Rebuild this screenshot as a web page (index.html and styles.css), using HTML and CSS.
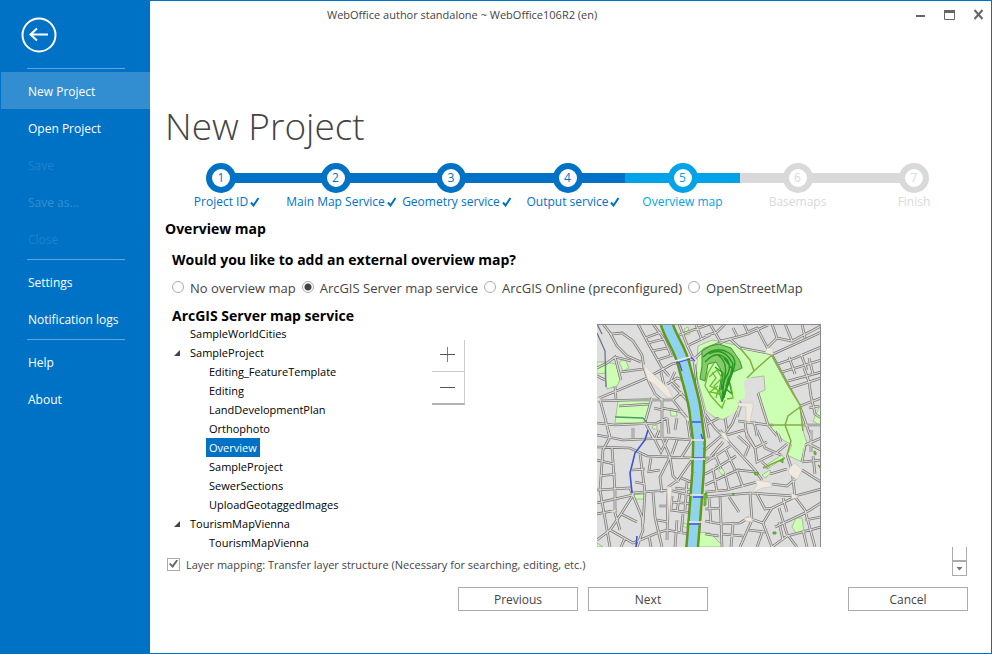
FILE: index.html
```html
<!DOCTYPE html>
<html lang="en">
<head>
<meta charset="utf-8">
<title>WebOffice author standalone</title>
<link rel="stylesheet" href="styles.css">
</head>
<body>
<div class="window">
  <aside class="sidebar">
    <button class="back" aria-label="Back">
      <svg width="36" height="36" viewBox="0 0 36 36"><circle cx="18" cy="18" r="16.5"/><path d="M27 17.5H10M16 11.5l-6.500 6 6.500 6"/></svg>
    </button>
    <nav class="menu">
      <hr>
      <a class="item active" href="#">New Project</a>
      <a class="item" href="#">Open Project</a>
      <a class="item off">Save</a>
      <a class="item off lit">Save as...</a>
      <a class="item off">Close</a>
      <hr>
      <a class="item" href="#">Settings</a>
      <a class="item" href="#">Notification logs</a>
      <hr>
      <a class="item" href="#">Help</a>
      <a class="item" href="#">About</a>
    </nav>
  </aside>

  <main class="main">
    <header class="titlebar">
      <span class="caption">WebOffice author standalone ~ WebOffice106R2 (en)</span>
      <div class="controls">
        <button aria-label="Minimize"><svg width="11" height="12" viewBox="0 0 11 12"><path d="M1 7h9" stroke-width="2"/></svg></button>
        <button aria-label="Maximize"><svg width="11" height="12" viewBox="0 0 11 12"><path d="M.5 2.500v8h10v-8M0 2h11" /><path d="M0 2.500h11" stroke-width="3"/></svg></button>
        <button aria-label="Close"><svg width="11" height="12" viewBox="0 0 11 12"><path d="M1.500 1l8 9M9.500 1l-8 9" stroke-width="2"/></svg></button>
      </div>
    </header>

    <h1>New Project</h1>

    <ol class="steps">
      <li class="done"><span class="dot">1</span><span class="name">Project ID<svg class="tick" viewBox="0 0 10 10"><path d="M1 5.500l2.500 3L8.500 1"/></svg></span></li>
      <li class="done"><span class="dot">2</span><span class="name">Main Map Service<svg class="tick" viewBox="0 0 10 10"><path d="M1 5.500l2.500 3L8.500 1"/></svg></span></li>
      <li class="done"><span class="dot">3</span><span class="name">Geometry service<svg class="tick" viewBox="0 0 10 10"><path d="M1 5.500l2.500 3L8.500 1"/></svg></span></li>
      <li class="done"><span class="dot">4</span><span class="name">Output service<svg class="tick" viewBox="0 0 10 10"><path d="M1 5.500l2.500 3L8.500 1"/></svg></span></li>
      <li class="current"><span class="dot">5</span><span class="name">Overview map</span></li>
      <li><span class="dot">6</span><span class="name">Basemaps</span></li>
      <li><span class="dot">7</span><span class="name">Finish</span></li>
    </ol>

    <h2>Overview map</h2>

    <form class="form">
      <h3 class="question">Would you like to add an external overview map?</h3>
      <div class="choices">
        <label><input type="radio" name="source">No overview map</label>
        <label><input type="radio" name="source" checked>ArcGIS Server map service</label>
        <label><input type="radio" name="source">ArcGIS Online (preconfigured)</label>
        <label><input type="radio" name="source">OpenStreetMap</label>
      </div>
      <h3 class="service">ArcGIS Server map service</h3>

      <div class="picker">
        <ul class="tree">
          <li><span>SampleWorldCities</span></li>
          <li class="open"><span>SampleProject</span>
            <ul>
              <li><span>Editing_FeatureTemplate</span></li>
              <li><span>Editing</span></li>
              <li><span>LandDevelopmentPlan</span></li>
              <li><span>Orthophoto</span></li>
              <li><span class="selected">Overview</span></li>
              <li><span>SampleProject</span></li>
              <li><span>SewerSections</span></li>
              <li><span>UploadGeotaggedImages</span></li>
            </ul>
          </li>
          <li class="open"><span>TourismMapVienna</span>
            <ul>
              <li><span>TourismMapVienna</span></li>
            </ul>
          </li>
        </ul>

        <div class="zoomer">
          <button type="button" aria-label="Add"><svg width="15" height="15" viewBox="0 0 15 15"><path class="up" d="M7.500 0v15"/><path d="M0 7.500h15"/></svg></button>
          <button type="button" aria-label="Remove"><svg width="15" height="15" viewBox="0 0 15 15"><path d="M0 7.500h15"/></svg></button>
        </div>

        <svg class="map" viewBox="0 0 224 223" role="img" aria-label="Map preview">
          <defs>
            <g id="streets">
              <path d="M0 75L24 65 50 54 75 40 97 35 108 25 133 15 151 10 171 1M6 0L14 10 25 9 36 17 45 31 47 44 52 58 58 70 65 76M13 9L20 22 30 32 44 38M41 0L51 19 65 44 72 52M48 14L64 8M51 19L67 15 74 31M56 0L67 15M55 27L70 24M60 36L76 31M82 0L90 21 97 36 100 61 108 94 112 114M82 11L113 0M90 22L113 11M99 1L105 16M0 44L10 39 18 33 24 56M18 33L34 37M24 48L46 45M0 52L8 56M18 62L19 75M3 76L8 94 13 114M55 74L48 98 56 114M65 74V114M0 77L36 76 76 76 90 94 93 114M0 99L18 101 60 99 70 94M22 82L54 80M76 76L85 68M70 60L80 54 86 56M64 48L68 66M75 60L90 76M78 48L74 56 82 64M65 84L86 88M70 94L72 110M36 104V114M57 84L65 86M80 94L78 106M84 88L90 94"/>
              <path d="M113 0L123 17 133 15 143 24 176 30 218 11 224 8M108 12L120 8 128 0M151 8L160 4 171 25M136 4L140 12M147 0L151 9M175 0L180 14 195 17 224 2M188 0L195 17M205 0L208 14M180 14L170 24M175 31L191 61 203 83 208 97 214 114M181 40L198 34 224 23M185 48L205 42 224 36M191 57L224 48M193 64L224 54M203 82L224 74M171 101H224M188 101L203 82M188 101V106M192 33L198 50M204 30L210 46M212 34L216 50M207 44L212 58 214 72 218 90 224 94M212 84L222 82M143 81L135 100 125 114M141 97L171 101M138 72L144 80 140 93M108 90L118 104 128 114M128 94L130 106M161 69L171 101M157 97L160 112M148 98L150 113 158 124M171 101L180 112M110 100L122 94"/>
              <path d="M0 111L26 116 71 114 94 116M0 123L33 124 50 132 95 134 120 134M11 106L13 113 6 126 3 166 10 206 13 223M15 124L18 166V189L23 206M0 166L33 164 35 169 47 168 72 166 93 171 108 173M0 179L36 171 24 190 13 206 0 216M35 169L45 193 46 206 40 223M13 206L36 219 60 209 70 206M43 130L48 168 46 200M65 114L73 133 63 153 65 169M56 169L58 193 65 223M71 163L81 156 95 136M73 133L76 152 82 158M71 169L70 216M50 148L63 146M35 146L48 145M38 158L48 160M62 182H70M60 196L71 198M75 172L74 186 96 189M83 170L80 187M90 158L88 186M78 164L96 166M75 178L96 180M84 154L94 158M80 196L78 223M70 206L92 210M86 190L84 210M94 118L84 134M58 116L64 128 71 114M80 116L75 130M52 106L58 116 62 106M0 136L17 140M3 152L19 150M0 190L20 186M24 190L40 198M28 214L24 223M52 212L54 223M54 134L52 146"/>
              <path d="M123 106L133 119 158 146 165 156M108 126L123 113 147 106M108 139L133 122M108 150L118 145 139 132M108 161L141 146 158 148M108 168L130 166 160 158M108 173L153 169 198 172 224 165M123 173L125 223M153 169L155 196 143 223M143 199L151 194 166 199 175 223M160 170L168 185 175 184M166 199L175 184 198 173 195 146 190 131M205 138L208 121 224 114M205 138L224 136M198 155L190 162 175 160M210 119L224 126M205 146L224 158M198 173L208 186 218 223M178 203L208 189 224 179M182 184L190 210 200 223M175 223L190 212 224 203M208 196L224 193M108 185L123 184M108 197L124 200 143 199M124 210L146 212M132 173L142 188M136 200L134 223M152 206L168 208M126 118L114 132M118 130L124 145M128 124L138 146M141 112L152 122 148 132M148 106L158 124 170 118M158 124L160 138 176 130M160 106L168 124 184 131M178 130L190 120M165 138L172 144M173 150L190 145M180 106L184 118M116 144L120 168M128 150L132 166M140 147L146 163M112 173L114 200M108 210L122 212M214 106V128M216 132L218 150M186 174L190 188M166 206L160 223M182 198L186 216M206 206L210 223"/>
            </g>
            <path id="river" d="M69 -2C75 18 83 22 88 45C93 64 98 78 99 94L102 118 101 149 98 189 95 225"/>
          </defs>
          <rect width="224" height="223" fill="#dedede"/>
          <g fill="#ccffb3" stroke="#8faf7c" stroke-width=".7">
            <path d="M0 38h9l-1 11-8 1zM9 38l10 2 4 16-3 6-10 3-2-11zM22 38l6-3 4 9-6 3zM21 77l34-3-7 25H18zM73 84l6 2 1 6h-6zM87 5l4-2 2 7-5 1z"/>
            <path d="M143 22l32 9 16 30 12 20 3 26 4 12-5 19-15-7 5-10-9-5-10-10-5-5-10-32 7-3-1-14-16 2-11 5 2 17-5 3-2 10-8 7-10-3-8-6-3-12-4-14-3-9 2-30 14-6z"/>
            <path d="M224 79l-8 18 8 5zM166 143l19-12 2 3-17 11zM165 151l8-5 1 3-6 5zM118 141h5l5 8-3 2zM199 194h6l2 14-8 1-4-6zM101 208l12 1 12 12v2h-25zM36 171l11-1v5H37zM86 199l4 1v4l-4-2zM0 219l6 4H0zM55 102l5-1v4h-4z"/>
          </g>
          <g class="casing"><use href="#streets"/></g>
          <g class="paving"><use href="#streets"/></g>
          <path class="parkland" d="M144 25l30 7 16 29 12 20 3 26 3 12-4 16-12-6 4-9-9-5-10-11-8-38 7-3-1-14-16 2-12 6 1 16-6 4-2 9-8 6-9-3-7-7-7-28z"/>
          <g fill="#efe9df" stroke="#c4bcb0" stroke-width=".5">
            <path d="M46 39l9 10 16 15 5 10-6-1-12-12-7-5-3-9zM123 108l5 1 5 10-6-4zM158 156l15 2 2 5-10 1-10 5 5-8zM193 143l5-4 7 7-5 10-9-7zM70 163h5l-3 33zM170 24h6v7l-8-2zM141 79h15v4l-3 15-4-1V83l-8-1zM147 194l7-1 2 5-7-1zM96 32l5 5-3 4zM0 73l4 2-4 3zM88 93l5 1-2 4zM194 169l8 4-7 2z"/>
          </g>
          <g class="trails"><path d="M143 24l10 12 4 11M175 31L158 46l-8 8M175 31l16 30 12 20 3 26M188 101l3-9 12-9M171 101h35M188 101l6 16-4 14M188 134l-22 10"/></g>
          <path fill="#85cb69" stroke="#38992a" stroke-width="1" d="M105 27l8-5 9-2 12 4 9 13 2 7-9 4-5 14-6 16-3-10 3-20-6-10-8 2-3 17-5-2 2-13z"/>
          <g fill="none" stroke="#249720" stroke-width="1.400"><path d="M106 33q13-12 26-4 9 6 4 18l-5 8-4 19M108 38q13-14 23-1 4 7-3 18l-3 10M112 30q15-8 24 10l-4 18-7 15M121 31q11 8 6 25l-2 20M127 34l9 12-7 16M118 43l8 6-2 17M132 56l3 14-6-5-4 12"/></g>
          <g fill="none" stroke="#6bbd25" stroke-width="1.300"><path d="M117 39l-6 10-3 13 6 10 7 8 4 4 3-8M115 48l4 6-6 8 8 4-2 8M112 53l8-7 5 8-8 8 8 9M121 62l-8 6 10 2M134 62l2 12-6 1"/></g>
          <use href="#river" class="bank"/>
          <use href="#river" class="shore"/>
          <use href="#river" class="water"/>
          <path fill="none" stroke="#4a4fe0" stroke-width="1.300" d="M79 39l14-4M82 38l3 9M95 98h9M96 134h10M104 110l2 6M96 173h10M92 200h10M94 33l4 4"/>
          <path fill="none" stroke="#efe9df" stroke-width="1.500" d="M78 37l15-4M94 116h13M93 135h15M93 171h15M92 198h13"/>
          <path fill="none" stroke="#3b53d6" stroke-width="1.600" d="M51 106l-3 10-10 13-5 20 2 20M40 212l-1 11"/>
          <path fill="none" stroke="#4f9a6a" stroke-width="1.300" d="M18 93l28 1 4 5"/>
          <path fill="none" stroke="#6f7890" stroke-width="1.300" d="M0 9l8 18 1 36M0 0l5 10"/>
          <g fill="#6fd03c" stroke="#4f9a1c" stroke-width=".8"><path d="M157 149l4-1v3h-3zM183 137l3-2v4zM176 208h3v2h-3zM217 127l2 1v3l-2-1zM135 170l2-1v2zM221 141l2 1v2zM107 170l2-1v12l-2 1zM106 119l2 3-2 3M108 171l2-2v5M100 48l-2 11 1-4"/></g>
          <path fill="none" stroke="#8a8a8a" d="M0 .5h223.500V223"/>
        </svg>
      </div>

      <label class="mapping"><input type="checkbox" checked>Layer mapping: Transfer layer structure (Necessary for searching, editing, etc.)</label>

      <div class="actions">
        <button type="button">Previous</button>
        <button type="button">Next</button>
        <button type="button" class="cancel">Cancel</button>
      </div>

      <div class="scroller"><span class="rail"></span><button type="button" aria-label="Scroll down"></button></div>
    </form>
  </main>
</div>
</body>
</html>
```
FILE: styles.css
```css
* { box-sizing: border-box; }

body {
  margin: 0;
  font-family: "Open Sans", "Noto Sans", sans-serif;
  font-size: 13px;
  color: #444;
  background: #fff;
}

button {
  margin: 0;
  padding: 0;
  border: 0;
  background: none;
  font: inherit;
  color: inherit;
}

ul, ol { margin: 0; padding: 0; list-style: none; }

.window {
  display: flex;
  min-height: 100vh;
  border: 1px solid #0072c6;
  border-left: 0;
}

/* Sidebar */
.sidebar {
  flex: 0 0 150px;
  background: #0072c6;
  color: #fff;
}
.back {
  display: block;
  width: 36px;
  height: 36px;
  margin: 16px 0 15px 21px;
}
.back svg { display: block; fill: none; stroke: #fff; stroke-width: 2; }
.menu hr {
  height: 1px;
  margin: 0 25px 3px 27px;
  border: 0;
  background: #5ba6dc;
}
.item {
  display: block;
  height: 37px;
  padding-left: 28px;
  font-size: 12px;
  line-height: 39px;
  color: #fff;
  text-decoration: none;
}
.item + hr { margin-top: 2px; }
.item.active { margin-left: 1px; padding-left: 27px; background: #338ed1; }
.item.off { color: #1e82cc; }
.item.lit { color: #338ed1; }

/* Main pane */
.main {
  flex: 1;
  min-width: 0;
}
.titlebar {
  display: flex;
  justify-content: space-between;
  height: 28px;
  padding: 0 7px 0 177px;
  font-size: 11px;
  line-height: 28px;
}
.controls { display: flex; align-items: center; gap: 18px; }
.controls svg { display: block; fill: none; stroke: #666; }

h1 {
  margin: 70px 0 0 15px;
  font-size: 37px;
  font-weight: 300;
  line-height: 54px;
}

/* Wizard steps */
.steps {
  display: grid;
  grid-template-columns: 116fr 113fr 118fr 115fr 115fr 115fr 118fr;
  margin: 10px 18px 0 13px;
}
.steps li {
  position: relative;
  display: flex;
  flex-direction: column;
  align-items: center;
  color: #d9d9d9;
}
.steps li::before {
  content: "";
  position: absolute;
  top: 10px;
  left: 0;
  right: 0;
  height: 10px;
  background: currentColor;
}
.steps li:first-child::before { left: 50%; }
.steps li:last-child::before { right: 50%; }
.steps .done { color: #0072c6; }
.steps .current { color: #00a2e8; }
.dot {
  position: relative;
  width: 30px;
  height: 30px;
  border: 6px solid currentColor;
  border-radius: 50%;
  background: #fff;
  font-size: 12px;
  line-height: 18px;
  text-align: center;
}
.name {
  position: relative;
  font-size: 12px;
  line-height: 18px;
  white-space: nowrap;
}
.tick {
  position: absolute;
  top: 4px;
  left: 100%;
  width: 10px;
  height: 10px;
  margin-left: 2px;
  fill: none;
  stroke: currentColor;
  stroke-width: 2;
}

h2, h3 { margin: 0; font-size: 14px; font-weight: 700; color: #000; }
h2 { margin: 8px 0 0 15px; line-height: 20px; }

.form { position: relative; padding-left: 16px; }
h3 { padding-left: 6px; }
.question { margin-top: 11px; line-height: 20px; }
.service { margin-top: 9px; line-height: 18px; }

.choices {
  display: flex;
  gap: 6px;
  margin: 8px 0 0 6px;
  line-height: 20px;
}
.choices label { display: flex; gap: 6px; white-space: nowrap; }
input { appearance: none; flex: none; margin: 0; background: #fff; border: 1px solid #ababab; }
input[type="radio"] { width: 12px; height: 12px; margin-top: 3px; border-radius: 50%; }
input[type="radio"]:checked {
  background: radial-gradient(circle, #444 3px, #fff 4px);
}

/* Service tree and preview */
.picker {
  display: grid;
  grid-template-columns: 266px 165px 224px;
  align-items: start;
  margin-top: -1px;
}
.tree { font-size: 11px; line-height: 19px; color: #000; }
.tree li { padding-left: 24px; }
.tree ul li { padding-left: 19px; }
.tree span { display: inline-block; padding: 0 3px; margin-left: -3px; }
.tree > li { position: relative; }
.tree .selected { background: #0072c6; color: #fff; }
.tree .open::before {
  content: "";
  position: absolute;
  top: 7px;
  left: 8px;
  width: 6px;
  height: 6px;
  background: #444;
  clip-path: polygon(100% 0, 100% 100%, 0 100%);
}
.zoomer {
  width: 33px;
  margin-top: 16px;
  border-right: 1px solid #ccc;
  border-bottom: 2px solid #b4b4b4;
}
.zoomer button {
  display: grid;
  place-items: center;
  width: 100%;
  height: 31px;
  padding-right: 2px;
}
.zoomer button:first-child { height: 32px; padding-bottom: 2px; border-bottom: 1px solid #ccc; }
.zoomer svg { fill: none; stroke: #555; }
.zoomer .up { stroke: #4d9a6a; }

.map { display: block; width: 224px; height: 223px; }
.casing { fill: none; stroke: #7a7a7a; stroke-width: 2.7; }
.paving { fill: none; stroke: #dedbd4; stroke-width: 1.2; }
.parkland { fill: #ccffb3; }
.trails { fill: none; stroke: #86ad45; stroke-width: 1.5; }
.bank { fill: none; stroke: #767f70; stroke-width: 14; }
.shore { fill: none; stroke: #5fa000; stroke-width: 13; }
.water { fill: none; stroke: #8fd3f0; stroke-width: 9; }

.mapping {
  display: flex;
  align-items: center;
  gap: 6px;
  height: 20px;
  margin: 2px 0 0 1px;
  font-size: 11px;
}
input[type="checkbox"] {
  width: 13px;
  height: 13px;
}
input[type="checkbox"]:checked::before {
  content: "";
  display: block;
  width: 9px;
  height: 9px;
  margin: 1px;
  background: #666;
  clip-path: polygon(0 50%, 15% 38%, 38% 62%, 85% 0, 100% 10%, 42% 95%);
}

.actions {
  display: flex;
  gap: 10px;
  margin: 13px 23px 0 292px;
}
.actions button {
  width: 120px;
  height: 24px;
  border: 1px solid #ababab;
  font-size: 12px;
}
.actions .cancel { margin-left: auto; }

.scroller {
  position: absolute;
  right: 24px;
  bottom: 35px;
  width: 15px;
}
.rail {
  display: block;
  height: 14px;
  border: solid #ababab;
  border-width: 0 1px 1px;
}
.scroller button {
  display: grid;
  place-items: center;
  width: 15px;
  height: 15px;
  border: 1px solid #ababab;
}
.scroller button::before {
  content: "";
  width: 7px;
  height: 4px;
  background: #777;
  clip-path: polygon(0 0, 100% 0, 50% 100%);
}
```
